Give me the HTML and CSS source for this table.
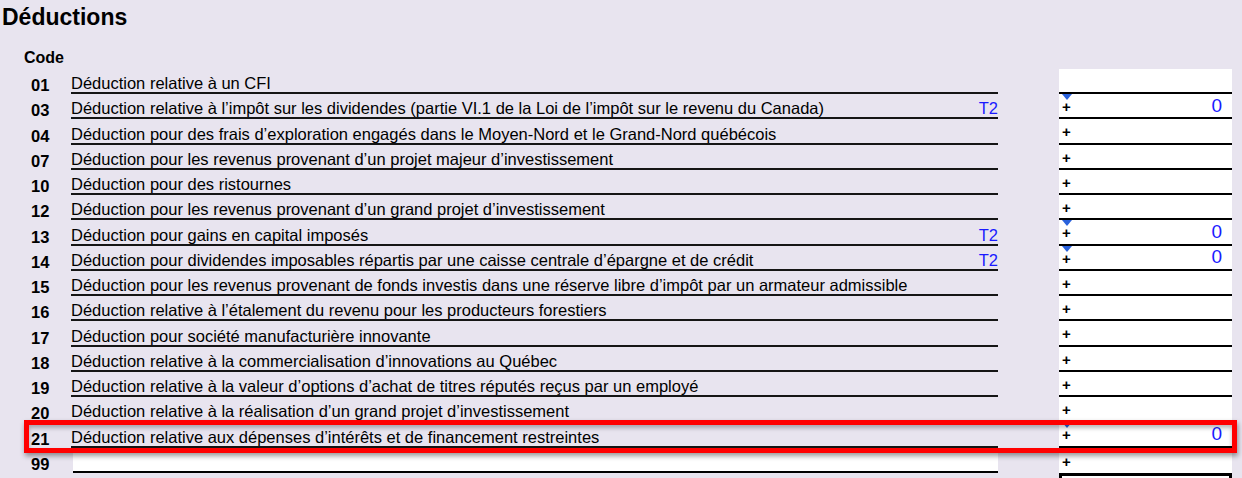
FILE: index.html
```html
<!DOCTYPE html>
<html lang="fr">
<head>
<meta charset="utf-8">
<title>Déductions</title>
<link rel="stylesheet" href="styles.css">
</head>
<body>
<div class="form">
  <h1 class="title">Déductions</h1>
  <div class="table">
    <div class="head"><span class="head-code">Code</span></div>

    <div class="row">
      <span class="code">01</span>
      <span class="label"><span>Déduction relative à un CFI</span></span>
      <span class="amt"></span>
    </div>
    <div class="row">
      <span class="code">03</span>
      <span class="label"><span>Déduction relative à l’impôt sur les dividendes (partie VI.1 de la Loi de l’impôt sur le revenu du Canada)</span><span class="ref">T2</span></span>
      <span class="amt"><span class="mark"></span><span class="plus">+</span><span class="val">0</span></span>
    </div>
    <div class="row">
      <span class="code">04</span>
      <span class="label"><span>Déduction pour des frais d’exploration engagés dans le Moyen-Nord et le Grand-Nord québécois</span></span>
      <span class="amt"><span class="plus">+</span></span>
    </div>
    <div class="row">
      <span class="code">07</span>
      <span class="label"><span>Déduction pour les revenus provenant d’un projet majeur d’investissement</span></span>
      <span class="amt"><span class="plus">+</span></span>
    </div>
    <div class="row">
      <span class="code">10</span>
      <span class="label"><span>Déduction pour des ristournes</span></span>
      <span class="amt"><span class="plus">+</span></span>
    </div>
    <div class="row">
      <span class="code">12</span>
      <span class="label"><span>Déduction pour les revenus provenant d’un grand projet d’investissement</span></span>
      <span class="amt"><span class="plus">+</span></span>
    </div>
    <div class="row">
      <span class="code">13</span>
      <span class="label"><span>Déduction pour gains en capital imposés</span><span class="ref">T2</span></span>
      <span class="amt"><span class="mark"></span><span class="plus">+</span><span class="val">0</span></span>
    </div>
    <div class="row">
      <span class="code">14</span>
      <span class="label"><span>Déduction pour dividendes imposables répartis par une caisse centrale d’épargne et de crédit</span><span class="ref">T2</span></span>
      <span class="amt"><span class="mark"></span><span class="plus">+</span><span class="val">0</span></span>
    </div>
    <div class="row">
      <span class="code">15</span>
      <span class="label"><span>Déduction pour les revenus provenant de fonds investis dans une réserve libre d’impôt par un armateur admissible</span></span>
      <span class="amt"><span class="plus">+</span></span>
    </div>
    <div class="row">
      <span class="code">16</span>
      <span class="label"><span>Déduction relative à l’étalement du revenu pour les producteurs forestiers</span></span>
      <span class="amt"><span class="plus">+</span></span>
    </div>
    <div class="row">
      <span class="code">17</span>
      <span class="label"><span>Déduction pour société manufacturière innovante</span></span>
      <span class="amt"><span class="plus">+</span></span>
    </div>
    <div class="row">
      <span class="code">18</span>
      <span class="label"><span>Déduction relative à la commercialisation d’innovations au Québec</span></span>
      <span class="amt"><span class="plus">+</span></span>
    </div>
    <div class="row">
      <span class="code">19</span>
      <span class="label"><span>Déduction relative à la valeur d’options d’achat de titres réputés reçus par un employé</span></span>
      <span class="amt"><span class="plus">+</span></span>
    </div>
    <div class="row">
      <span class="code">20</span>
      <span class="label"><span>Déduction relative à la réalisation d’un grand projet d’investissement</span></span>
      <span class="amt"><span class="plus">+</span></span>
    </div>
    <div class="row row-highlight">
      <span class="code">21</span>
      <span class="label"><span>Déduction relative aux dépenses d’intérêts et de financement restreintes</span></span>
      <span class="amt"><span class="mark"></span><span class="plus">+</span><span class="val">0</span></span>
      <span class="highlight"></span>
    </div>
    <div class="row row-input">
      <span class="code">99</span>
      <span class="label label-input"></span>
      <span class="amt amt-last"><span class="plus">+</span></span>
    </div>
    <div class="total-row">
      <span class="total"></span>
    </div>
  </div>
</div>
</body>
</html>
```

FILE: styles.css
```css
html, body {
  margin: 0;
  padding: 0;
}

body {
  background: #e8e4ef;
  font-family: "Liberation Sans", Arial, sans-serif;
  color: #000;
  overflow: hidden;
}

.form {
  width: 1242px;
  height: 478px;
}

.title {
  margin: 0;
  padding: 2px 0 0 2px;
  height: 30px;
  font-size: 23px;
  line-height: 30px;
  font-weight: bold;
}

.table {
  margin-left: 24px;
  width: 1208px;
}

.head {
  height: 36.75px;
  display: flex;
  align-items: flex-end;
  padding-bottom: 1.5px;
  box-sizing: border-box;
}

.head-code {
  font-size: 16px;
  font-weight: bold;
  line-height: 18px;
}

.row {
  position: relative;
  display: grid;
  grid-template-columns: 47px 927px 61px 173px;
  height: 25.25px;
}

.code {
  grid-column: 1;
  align-self: end;
  padding-left: 7px;
  font-size: 16.5px;
  font-weight: bold;
  line-height: 18px;
}

.label {
  grid-column: 2;
  display: flex;
  justify-content: space-between;
  align-items: flex-end;
  border-bottom: 2px solid #151515;
  font-size: 16.5px;
  line-height: 18px;
  white-space: nowrap;
}

.ref {
  color: #1a1aff;
}

.amt {
  grid-column: 4;
  position: relative;
  display: flex;
  align-items: center;
  justify-content: space-between;
  background: #fff;
  border-bottom: 2px solid #000;
  padding: 0 10px 0 3px;
}

.plus {
  font-size: 15px;
  font-weight: bold;
  line-height: 16px;
  padding-top: 3px;
}

.val {
  color: #1a1aff;
  font-size: 19px;
  line-height: 20px;
}

.mark {
  position: absolute;
  left: 3px;
  top: 0;
  width: 0;
  height: 0;
  border-left: 5px solid transparent;
  border-right: 5px solid transparent;
  border-top: 6px solid #2a62dc;
}

.label-input {
  background: #fff;
  margin-left: 2px;
  border-bottom-color: #000;
}

.amt-last {
  border-bottom: none;
}

.highlight {
  position: absolute;
  z-index: 5;
  left: 0;
  right: -5px;
  top: -2px;
  bottom: -5px;
  border: 5px solid #ff0000;
  box-shadow: 1px 3px 5px rgba(0, 0, 0, 0.4), inset 0 3px 4px rgba(0, 0, 0, 0.28);
  pointer-events: none;
}

.total-row {
  display: grid;
  grid-template-columns: 47px 927px 61px 173px;
}

.total {
  grid-column: 4;
  height: 40px;
  background: #fff;
  border: 3px solid #000;
}
```
